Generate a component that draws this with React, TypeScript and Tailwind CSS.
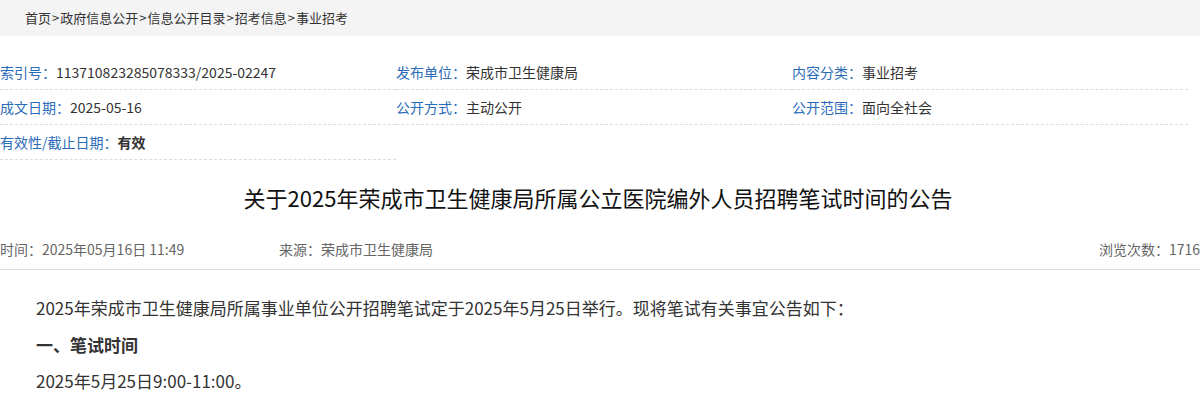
const font = {
  fontFamily: '"Noto Sans CJK SC", "Liberation Sans", sans-serif',
};

const crumbs = ["首页", "政府信息公开", "信息公开目录", "招考信息", "事业招考"];

const info: { label: string; value: string; bold?: boolean }[] = [
  { label: "索引号：", value: "113710823285078333/2025-02247" },
  { label: "发布单位：", value: "荣成市卫生健康局" },
  { label: "内容分类：", value: "事业招考" },
  { label: "成文日期：", value: "2025-05-16" },
  { label: "公开方式：", value: "主动公开" },
  { label: "公开范围：", value: "面向全社会" },
  { label: "有效性/截止日期：", value: "有效", bold: true },
];

export default function App() {
  return (
    <div className="w-[1200px] bg-white text-[#333]" style={font}>
      <div className="h-9 bg-[#f4f4f4] pl-[25px] text-[13px] leading-9 text-[#333]">
        {crumbs.map((c, i) => (
          <span key={c}>
            {i > 0 && <span className="px-[1px]">&gt;</span>}
            {c}
          </span>
        ))}
      </div>

      <div className="flex flex-wrap pt-[19px]">
        {info.map((item) => (
          <div
            key={item.label}
            className="flex h-[35px] w-[396px] items-center border-b border-dashed border-[#dcdcdc] text-[14px]"
          >
            <span className="text-[#2a6cb8]">{item.label}</span>
            <span className={item.bold ? "font-bold text-[#333]" : "text-[#333]"}>
              {item.value}
            </span>
          </div>
        ))}
      </div>

      <h1 className="mt-[22px] pr-[4px] text-center text-[22px] leading-[30px] text-[#111]">
        关于2025年荣成市卫生健康局所属公立医院编外人员招聘笔试时间的公告
      </h1>

      <div className="mt-[18px] flex h-10 items-center border-b border-[#dddddd] text-[14px] text-[#666]">
        <span className="w-[279px]">时间：2025年05月16日 11:49</span>
        <span>来源：荣成市卫生健康局</span>
        <span className="ml-auto">浏览次数：1716</span>
      </div>

      <div className="pt-[20px] pl-9 text-[17px] leading-[36.5px] text-[#333]">
        <p>2025年荣成市卫生健康局所属事业单位公开招聘笔试定于2025年5月25日举行。现将笔试有关事宜公告如下：</p>
        <p className="font-bold">一、笔试时间</p>
        <p>2025年5月25日9:00-11:00。</p>
      </div>
    </div>
  );
}
